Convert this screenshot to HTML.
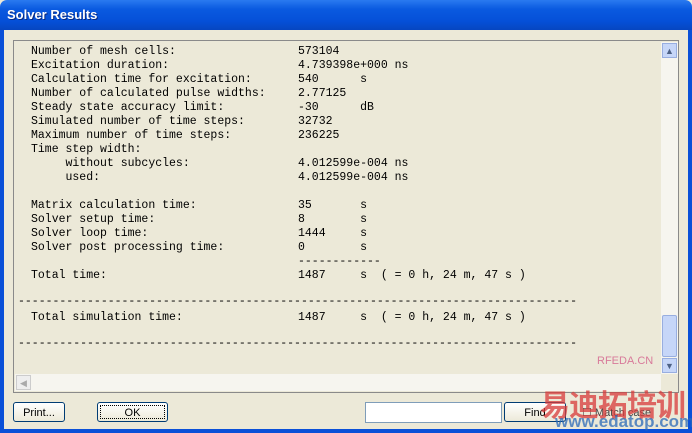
<!DOCTYPE html>
<html><head><meta charset="utf-8"><style>
body{margin:0;width:692px;height:433px;overflow:hidden;background:#ECE9D8;position:relative;font-family:"Liberation Sans",sans-serif}
#title{position:absolute;left:0;top:0;width:692px;height:30px;background:linear-gradient(#2a7af0,#0a5ae0 30%,#0550d8 70%,#0646c0);border-radius:7px 7px 0 0}
#title span{position:absolute;left:7px;top:7px;color:#fff;font-weight:bold;font-size:13px;text-shadow:1px 1px #0a2a80}
.bl{position:absolute;top:30px;width:4px;height:403px;background:#0a50d8}
#panel{position:absolute;left:13px;top:40px;width:666px;height:353px;border:1px solid #8a8a8a;background:#ECE9D8;box-sizing:border-box}
.t{position:absolute;font-family:"Liberation Mono",monospace;font-size:11.5px;color:#000;white-space:pre;line-height:14px}
#vs{position:absolute;left:661px;top:42px;width:17px;height:332px;background:#f6f5ef}
#hs{position:absolute;left:15px;top:374px;width:646px;height:17px;background:#f6f5ef}
.btn{position:absolute;top:402px;height:20px;border:1px solid #003c74;border-radius:3px;background:linear-gradient(#fff,#ece9d8);font-size:11px;text-align:center;line-height:20px;box-sizing:border-box}
</style></head><body>
<div id="title"><span>Solver Results</span></div>
<div class="bl" style="left:0"></div><div class="bl" style="right:0"></div>
<div style="position:absolute;left:0;top:429px;width:692px;height:4px;background:#0a50d8"></div>
<div id="panel"></div>
<div id="vs">
<div style="position:absolute;left:1px;top:1px;width:15px;height:15px;background:#c6d6f8;border:1px solid #98aee0;box-sizing:border-box;font-size:9px;line-height:14px;text-align:center;color:#4d6185">▲</div>
<div style="position:absolute;left:1px;top:273px;width:15px;height:42px;background:#c6d6f8;border:1px solid #98aee0;border-radius:2px;box-sizing:border-box"></div>
<div style="position:absolute;left:1px;top:316px;width:15px;height:15px;background:#c6d6f8;border:1px solid #98aee0;box-sizing:border-box;font-size:9px;line-height:14px;text-align:center;color:#4d6185">▼</div>
</div>
<div id="hs"><div style="position:absolute;left:1px;top:1px;width:15px;height:15px;background:#eee;border:1px solid #ccc;box-sizing:border-box;font-size:9px;line-height:14px;text-align:center;color:#aaa">◀</div></div>

<div class="t" style="left:31px;top:45px">Number of mesh cells:
Excitation duration:
Calculation time for excitation:
Number of calculated pulse widths:
Steady state accuracy limit:
Simulated number of time steps:
Maximum number of time steps:
Time step width:
     without subcycles:
     used:

Matrix calculation time:
Solver setup time:
Solver loop time:
Solver post processing time:

Total time:</div>
<div class="t" style="left:298px;top:45px">573104
4.739398e+000 ns
540      s
2.77125
-30      dB
32732
236225

4.012599e-004 ns
4.012599e-004 ns

35       s
8        s
1444     s
0        s
------------
1487     s  ( = 0 h, 24 m, 47 s )</div>
<div class="t" style="left:18px;top:295px">---------------------------------------------------------------------------------</div>
<div class="t" style="left:31px;top:311px">Total simulation time:</div>
<div class="t" style="left:298px;top:311px">1487     s  ( = 0 h, 24 m, 47 s )</div>
<div class="t" style="left:18px;top:337px">---------------------------------------------------------------------------------</div>

<div class="btn" style="left:13px;width:52px">Print...</div>
<div class="btn" style="left:97px;width:71px;outline:1px dotted #000;outline-offset:-4px">OK</div>
<div style="position:absolute;left:365px;top:402px;width:137px;height:21px;background:#fff;border:1px solid #7f9db9;box-sizing:border-box"></div>
<div class="btn" style="left:504px;width:62px">Find</div>
<div style="position:absolute;left:582px;top:406px;font-size:11px;color:#444">☐ Match case</div>
<div style="position:absolute;left:540px;top:381px;font-family:'Noto Sans CJK SC',sans-serif;font-size:30px;font-weight:bold;color:#d83a3a;opacity:.75;letter-spacing:-1px">易迪拓培训</div>
<div style="position:absolute;left:555px;top:412px;font-family:'Liberation Sans',sans-serif;font-size:17px;font-weight:bold;color:#2a6ab8;opacity:.75">www.edatop.com</div>
<div style="position:absolute;left:597px;top:355px;font-size:11px;color:#d87a9a">RFEDA.CN</div>
</body></html>
